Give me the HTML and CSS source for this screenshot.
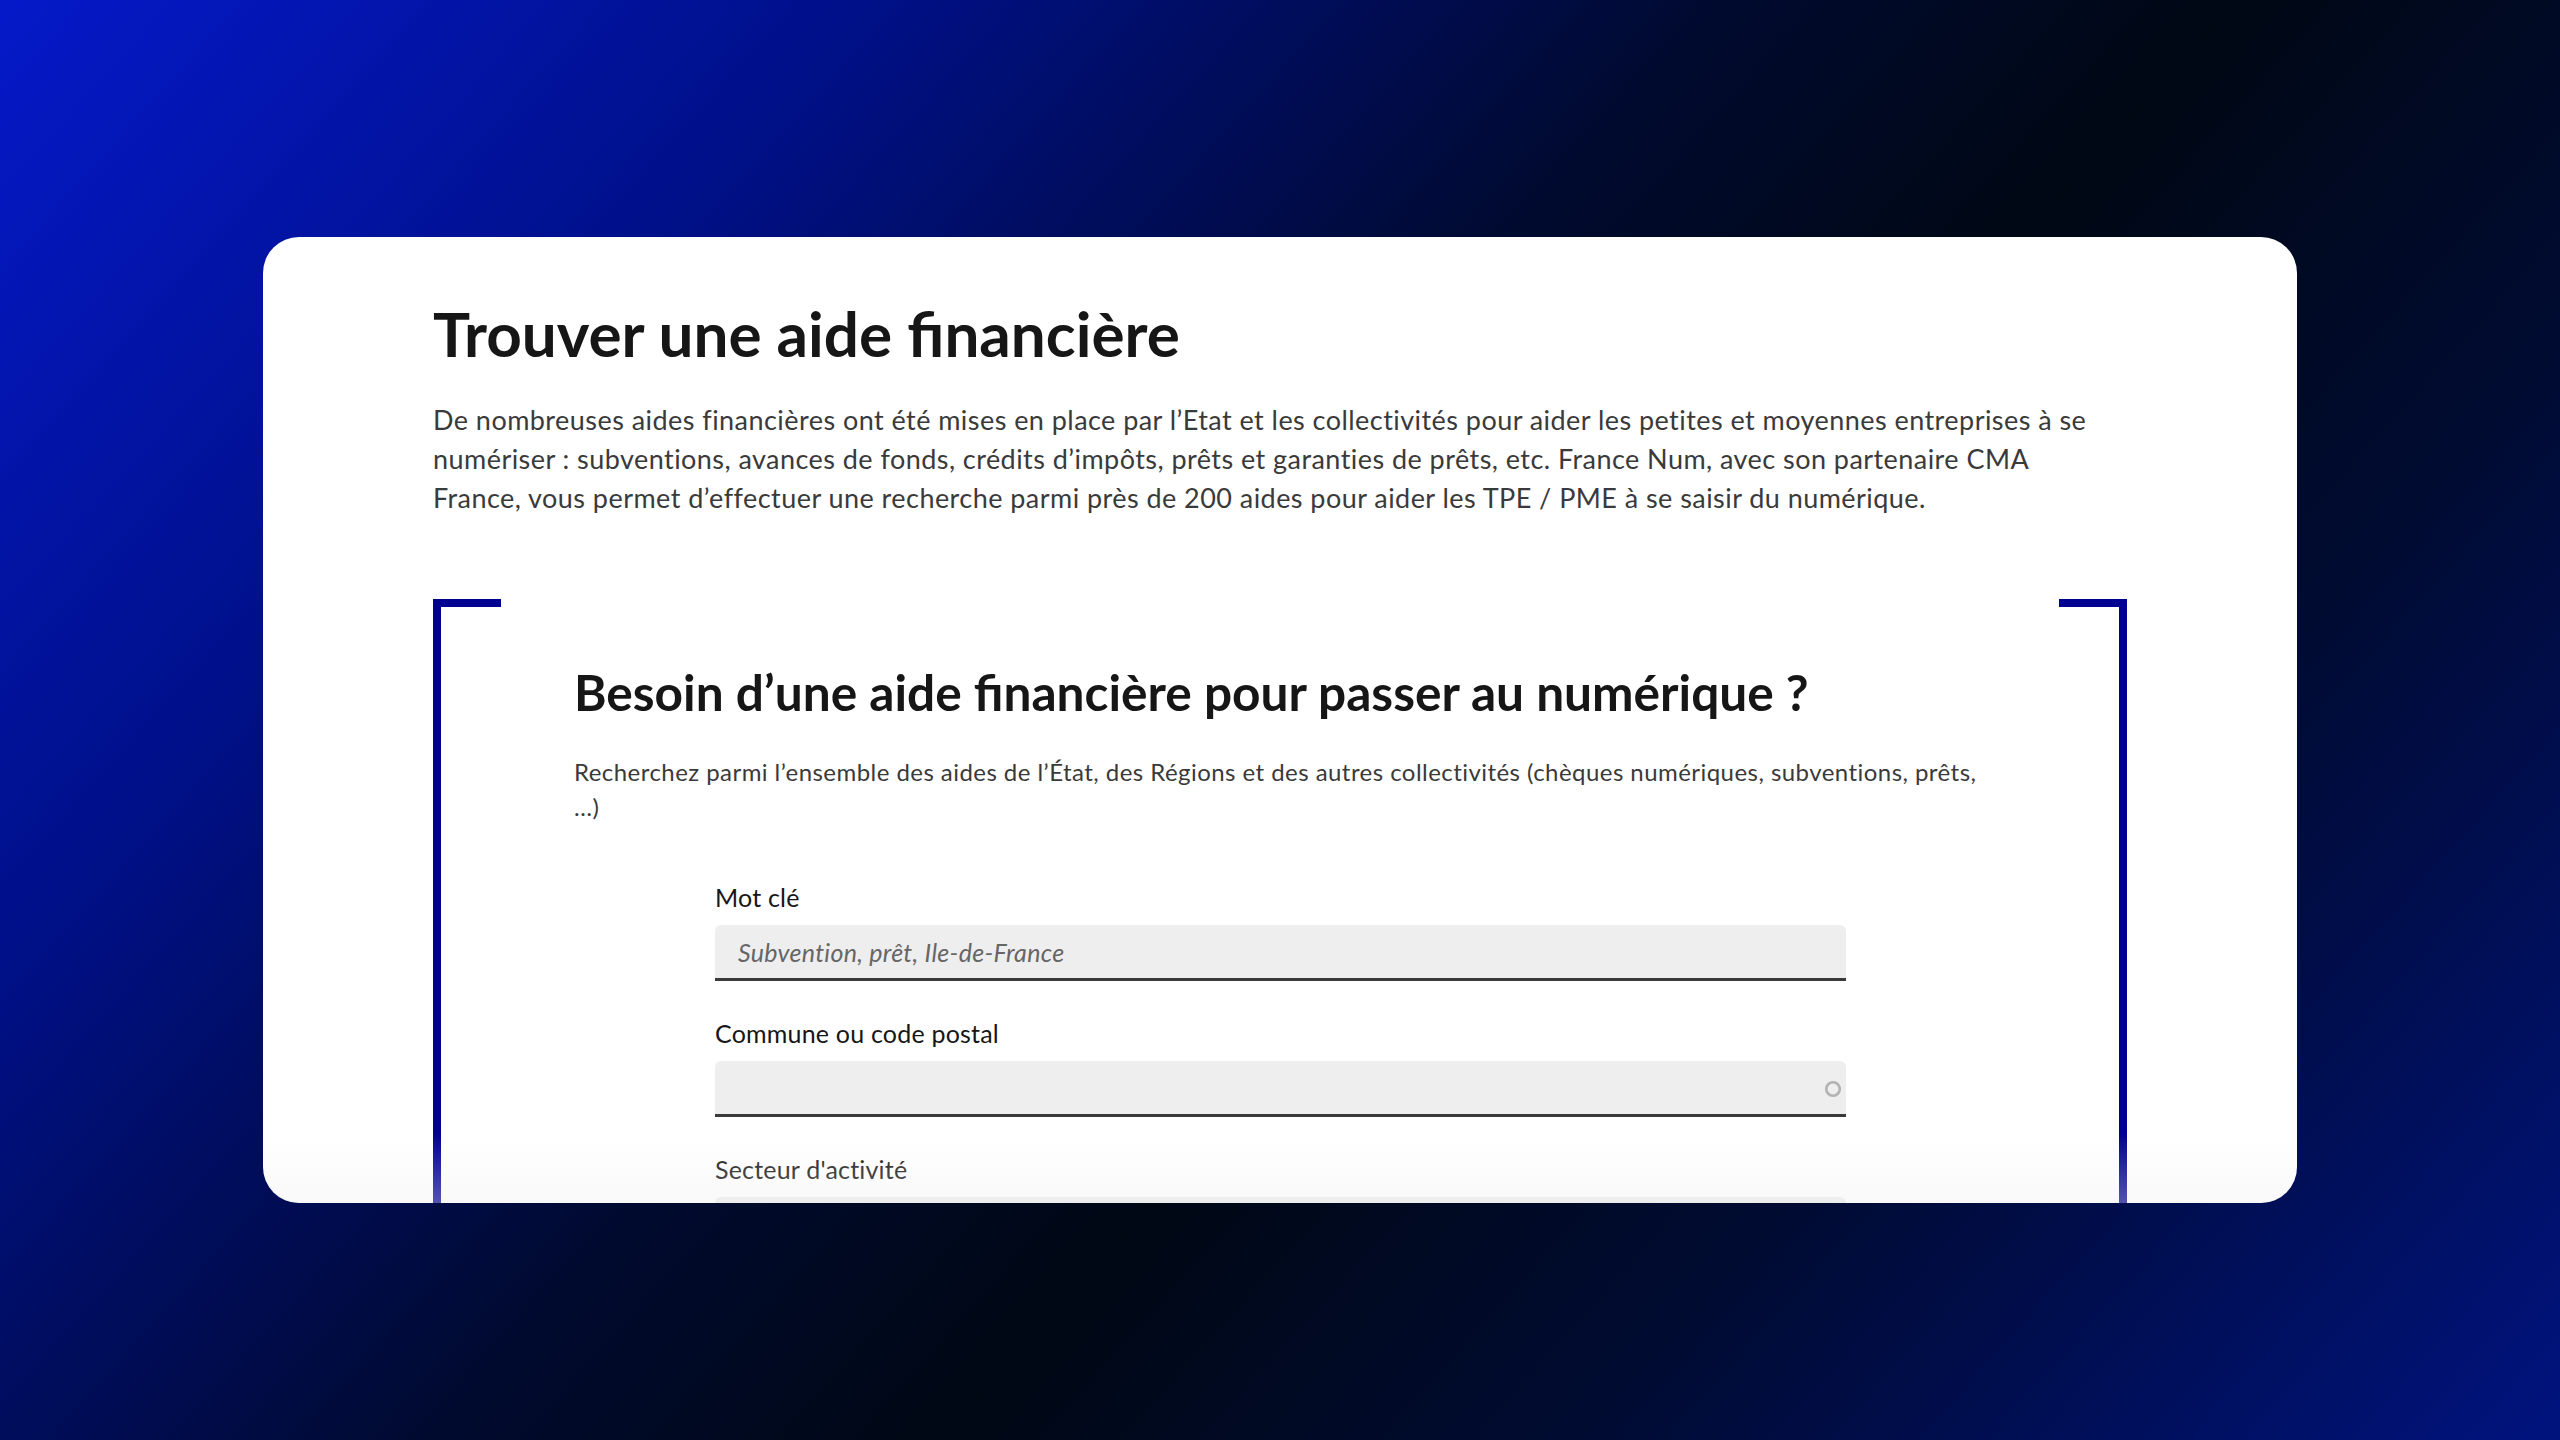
FILE: index.html
```html
<!DOCTYPE html>
<html lang="fr">
<head>
<meta charset="utf-8">
<title>Trouver une aide financière</title>
<link rel="stylesheet" href="styles.css">
</head>
<body>
<div class="stage">
  <main class="card">
    <h1 class="title">Trouver une aide financière</h1>
    <p class="intro">De nombreuses aides financières ont été mises en place par l’Etat et les collectivités pour aider les petites et moyennes entreprises à se<br>numériser : subventions, avances de fonds, crédits d’impôts, prêts et garanties de prêts, etc. France Num, avec son partenaire CMA<br>France, vous permet d’effectuer une recherche parmi près de 200 aides pour aider les TPE / PME à se saisir du numérique.</p>
    <section class="finder">
      <h2 class="finder-title">Besoin d’une aide financière pour passer au numérique ?</h2>
      <p class="finder-text">Recherchez parmi l’ensemble des aides de l’État, des Régions et des autres collectivités (chèques numériques, subventions, prêts,<br>…)</p>
      <form class="form">
        <div class="field">
          <label class="label" for="kw">Mot clé</label>
          <input class="input" id="kw" type="text" placeholder="Subvention, prêt, Ile-de-France">
        </div>
        <div class="field">
          <label class="label" for="city">Commune ou code postal</label>
          <div class="input-wrap">
            <input class="input" id="city" type="text">
            <svg class="spinner" viewBox="0 0 20 20" width="18" height="18" aria-hidden="true"><circle cx="10" cy="10" r="7.5" fill="none" stroke="#b3b3b3" stroke-width="3"/></svg>
          </div>
        </div>
        <div class="field">
          <label class="label" for="sector">Secteur d'activité</label>
          <input class="input" id="sector" type="text">
        </div>
      </form>
    </section>
  </main>
</div>
</body>
</html>
```
FILE: styles.css
```css
* { box-sizing: border-box; }
html, body { margin: 0; padding: 0; }
body { font-family: Lato, "Noto Sans", sans-serif; }

.stage {
  width: 2560px;
  height: 1440px;
  display: flex;
  align-items: center;
  justify-content: center;
  background: linear-gradient(132deg, #0519c9 0%, #00108a 22%, #000a2e 45%, #000814 58%, #000b33 75%, #00137e 100%);
}

.card {
  position: relative;
  width: 2034px;
  height: 966px;
  background: #ffffff;
  border-radius: 36px;
  overflow: hidden;
  padding: 61px 170px 0;
}
.card::after {
  content: "";
  position: absolute;
  left: 0; right: 0; bottom: 0;
  height: 70px;
  background: linear-gradient(rgba(255,255,255,0), rgba(238,238,238,0.35));
  pointer-events: none;
}

.title {
  margin: 0;
  font-weight: 700;
  font-size: 62px;
  line-height: 70px;
  color: #161616;
}

.intro {
  margin: 32px 0 0;
  font-size: 27px;
  letter-spacing: 0.45px;
  line-height: 39px;
  color: #3a3a3a;
  white-space: nowrap;
}

.finder {
  position: relative;
  margin-top: 82px;
  border-left: 8px solid #000091;
  border-right: 8px solid #000091;
  padding: 65px 136px 0 133px;
  min-height: 900px;
}
.finder::before,
.finder::after {
  content: "";
  position: absolute;
  top: 0;
  width: 68px;
  height: 8px;
  background: #000091;
}
.finder::before { left: -8px; }
.finder::after { right: -8px; }

.finder-title {
  margin: 0;
  font-weight: 700;
  font-size: 49.6px;
  line-height: 56px;
  color: #161616;
}

.finder-text {
  margin: 34px 0 0;
  font-size: 24px;
  letter-spacing: 0.45px;
  line-height: 35px;
  color: #3a3a3a;
  white-space: nowrap;
}

.form {
  width: 1131px;
  margin: 55px 0 0 141px;
  display: flex;
  flex-direction: column;
  gap: 34px;
}

.label {
  display: block;
  font-size: 25px;
  letter-spacing: 0.2px;
  line-height: 36px;
  color: #161616;
  margin-bottom: 10px;
}

.input-wrap { position: relative; }

.input {
  display: block;
  width: 100%;
  height: 56px;
  border: 0;
  border-bottom: 3px solid #3a3a3a;
  border-radius: 6px 6px 0 0;
  background: #eeeeee;
  padding: 0 23px;
  font-family: Lato, "Noto Sans", sans-serif;
  font-size: 25px;
  letter-spacing: 0.3px;
  color: #161616;
  outline: none;
}
.input::placeholder {
  color: #666666;
  font-style: italic;
  opacity: 1;
}

.spinner {
  position: absolute;
  right: 4px;
  top: 19px;
}
```
